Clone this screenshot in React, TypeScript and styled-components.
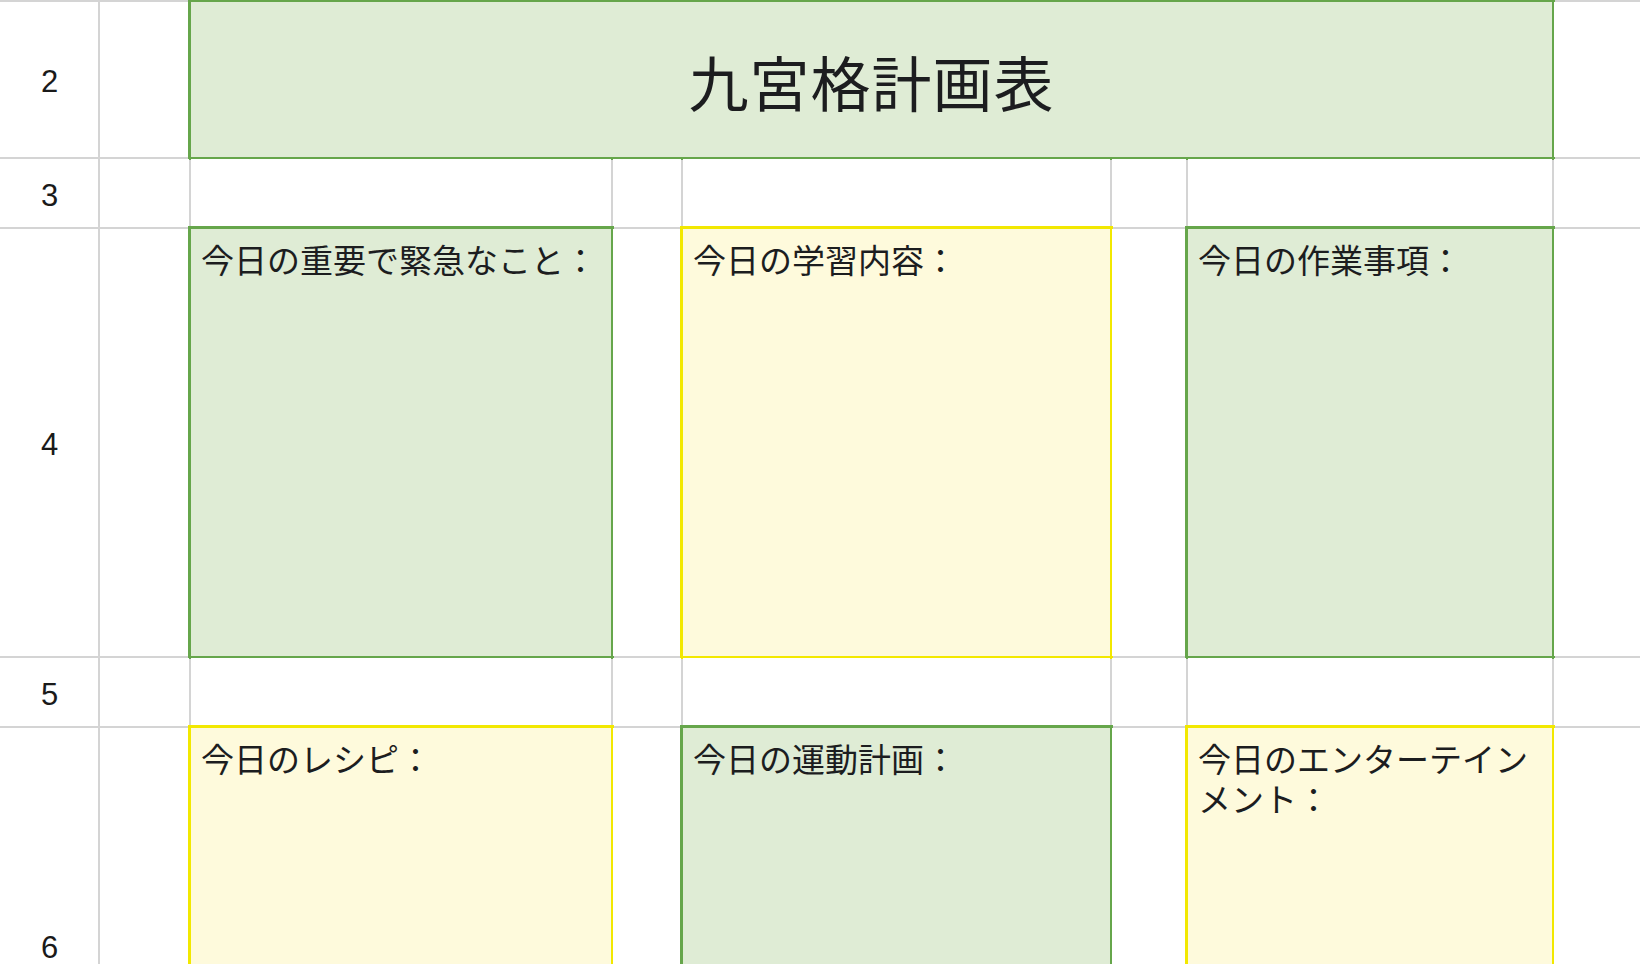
import React from 'react';
import styled, { createGlobalStyle } from 'styled-components';

const GlobalStyle = createGlobalStyle`
    html,
    body {
        margin: 0;
        padding: 0;
        background: #ffffff;
        overflow: hidden;
    }
`;

type Tone = 'green' | 'yellow';

const tones: Record<Tone, { fill: string; line: string }> = {
    green: { fill: '#dfecd5', line: '#66a64b' },
    yellow: { fill: '#fefadc', line: '#f2e800' }
};

const Sheet = styled.div`
    display: grid;
    grid-template-columns: 98px 89px 420px 68px 427px 74px 364px 1fr;
    grid-template-rows: 155px 68px 427px 68px 434px;
    gap: 2px;
    width: 1640px;
    background: #d4d4d4;
    border-top: 2px solid #d4d4d4;
    font-family: 'Noto Sans CJK JP', 'Noto Sans', sans-serif;
    color: #1c1d1f;
`;

const Cell = styled.div`
    background: #ffffff;
`;

const RowHeader = styled.div`
    display: flex;
    align-items: center;
    justify-content: center;
    background: #ffffff;
    font-family: 'Liberation Sans', Arial, sans-serif;
    font-size: 31px;
    color: #1a1a1a;
    padding: 5px 0 0 1px;
`;

const TitleCell = styled.div`
    grid-column: 3 / 8;
    display: flex;
    align-items: center;
    justify-content: center;
    padding-top: 2px;
    background: ${tones.green.fill};
    outline: 3px solid ${tones.green.line};
    font-size: 60px;
    letter-spacing: 1px;
`;

const Box = styled.div<{ $tone: Tone }>`
    background: ${p => tones[p.$tone].fill};
    outline: 3px solid ${p => tones[p.$tone].line};
    padding: 10px 8px 0 10px;
    font-size: 33px;
    line-height: 40px;
    word-break: break-all;
`;

const rows = [
    [
        { tone: 'green' as Tone, label: '今日の重要で緊急なこと：' },
        { tone: 'yellow' as Tone, label: '今日の学習内容：' },
        { tone: 'green' as Tone, label: '今日の作業事項：' }
    ],
    [
        { tone: 'yellow' as Tone, label: '今日のレシピ：' },
        { tone: 'green' as Tone, label: '今日の運動計画：' },
        { tone: 'yellow' as Tone, label: '今日のエンターテインメント：' }
    ]
];

const BlankRow = ({ n }: { n: number }) => (
    <>
        <RowHeader>{n}</RowHeader>
        {Array.from({ length: 7 }).map((_, i) => (
            <Cell key={i} />
        ))}
    </>
);

const App = () => (
    <>
        <GlobalStyle />
        <Sheet>
            <RowHeader>2</RowHeader>
            <Cell />
            <TitleCell>九宮格計画表</TitleCell>
            <Cell />

            <BlankRow n={3} />

            {rows.map((boxes, r) => (
                <React.Fragment key={r}>
                    <RowHeader>{r === 0 ? 4 : 6}</RowHeader>
                    <Cell />
                    <Box $tone={boxes[0].tone}>{boxes[0].label}</Box>
                    <Cell />
                    <Box $tone={boxes[1].tone}>{boxes[1].label}</Box>
                    <Cell />
                    <Box $tone={boxes[2].tone}>{boxes[2].label}</Box>
                    <Cell />
                    {r === 0 && <BlankRow n={5} />}
                </React.Fragment>
            ))}
        </Sheet>
    </>
);

export default App;
